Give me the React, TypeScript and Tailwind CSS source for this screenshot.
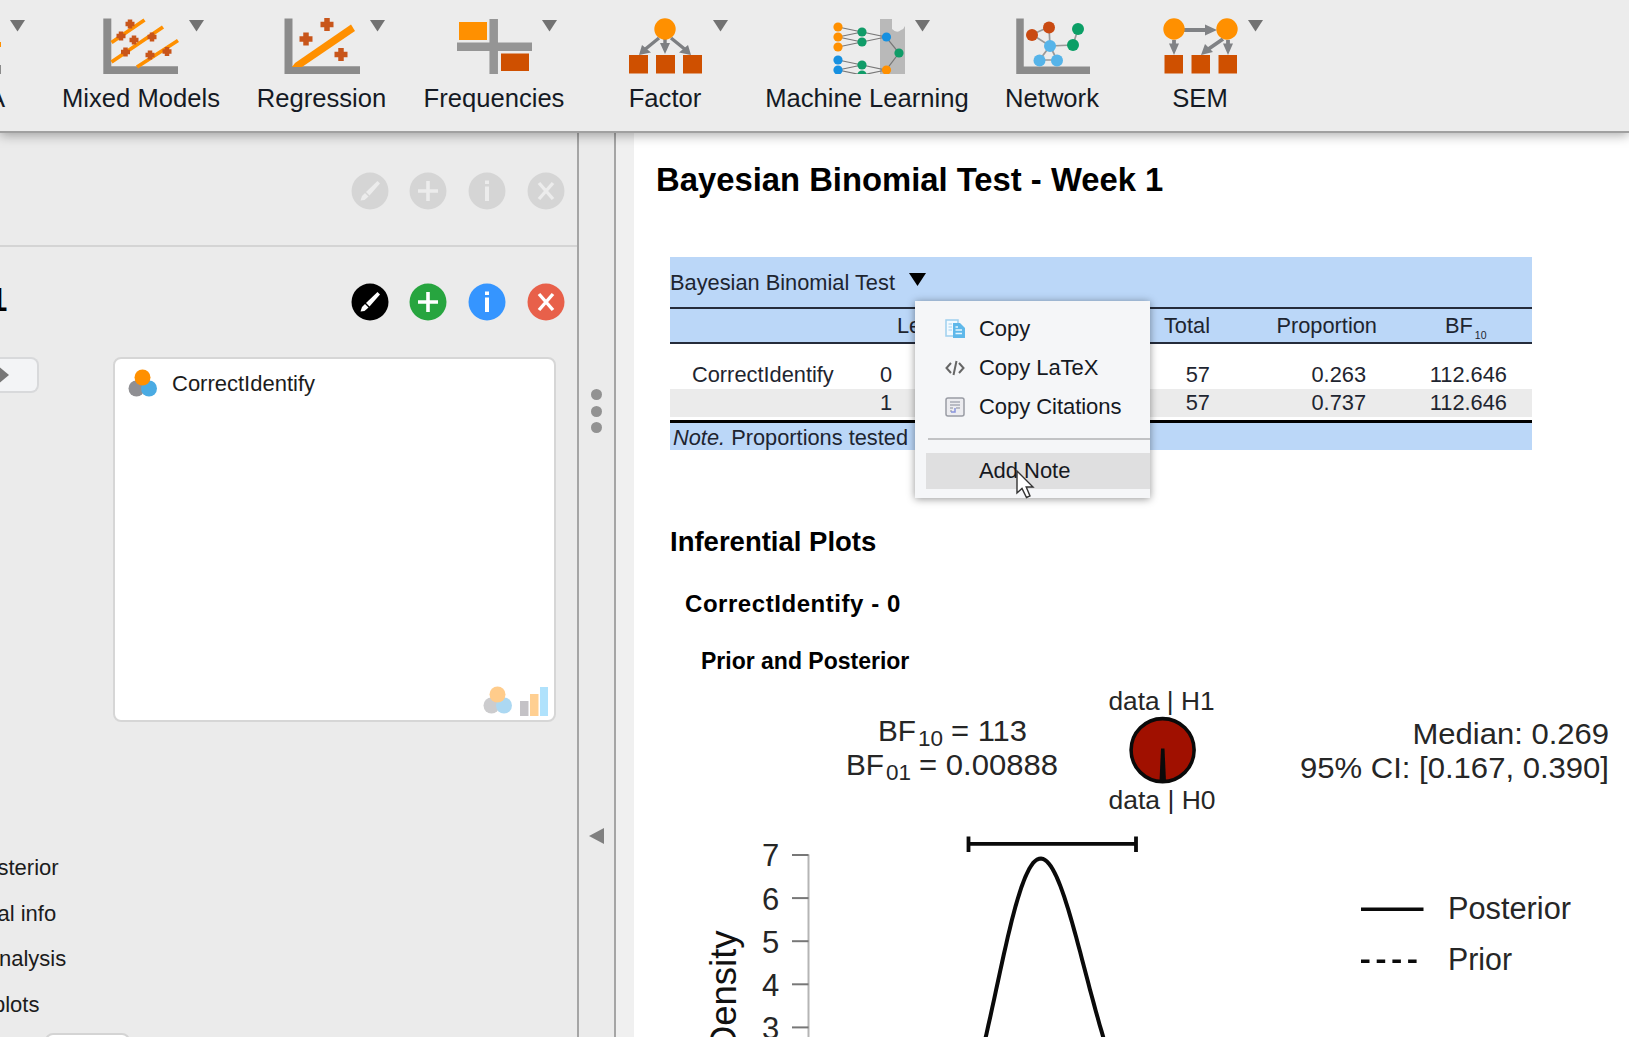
import type { ReactNode } from "react";

const GRAY = "#8b8b8b";
const ORANGE = "#ff9000";
const RUST = "#cf5000";

function Caret() {
  return (
    <svg className="absolute left-[86px] top-[2px]" width="15" height="12" viewBox="0 0 15 12">
      <path d="M0 0H15L7.5 11.5Z" fill="#727272" />
    </svg>
  );
}

function Icon({ x, children }: { x: number; children: ReactNode }) {
  return (
    <svg width="76" height="56" viewBox={`${x} 18 76 56`}>
      {children}
    </svg>
  );
}

function Plus({ x, y, s = 5, w = 4 }: { x: number; y: number; s?: number; w?: number }) {
  return <path d={`M${x - s} ${y}h${2 * s}M${x} ${y - s}v${2 * s}`} stroke="#c8551a" strokeWidth={w} />;
}

function MixedIcon() {
  return (
    <Icon x={103}>
      <path d="M107.3 18.5V70.3H178" fill="none" stroke={GRAY} strokeWidth="8" />
      <path d="M111.5 42.5L144.5 20M111.5 62L163 27M137 67L178 40.500" stroke={ORANGE} strokeWidth="3.8" />
      {[[130, 24], [121, 36], [134, 40], [152, 37], [125.5, 52], [150, 55], [167, 51.5]].map(([x, y]) => (
        <Plus key={`${x}-${y}`} x={x} y={y} s={4.5} w={4.5} />
      ))}
    </Icon>
  );
}

function RegressionIcon() {
  return (
    <Icon x={283}>
      <path d="M287.500 18.5V70.3H360" fill="none" stroke={GRAY} strokeWidth="8" />
      <path d="M291 67L294 63L350 24.500L354 31L301 67Z" fill={ORANGE} />
      <Plus x={305} y={39} s={6.5} w={5.5} />
      <Plus x={326} y={24.5} s={6.5} w={5.5} />
      <Plus x={340} y={54.5} s={6.5} w={5.5} />
    </Icon>
  );
}

function FrequenciesIcon() {
  return (
    <Icon x={456}>
      <path d="M493.700 19V74M457 46.700H532" stroke="#959595" strokeWidth="8.5" />
      <rect x="459" y="22" width="28" height="18" fill={ORANGE} />
      <rect x="501" y="53.5" width="28" height="17.5" fill={RUST} />
    </Icon>
  );
}

function FactorIcon() {
  return (
    <Icon x={627}>
      <path d="M659 38L643 51M665 38V48M671 38L687 51" stroke="#7d7f82" strokeWidth="3.400" />
      <path d="M639 55L642 45L651 52.500ZM691 55L688 45L679 52.500ZM665 54L660 43H670Z" fill="#7d7f82" />
      <circle cx="665" cy="29" r="10.700" fill={ORANGE} />
      <path d="M629 55h19v18.500h-19zM656 55h19v18.500h-19zM683 55h19v18.500h-19z" fill={RUST} />
    </Icon>
  );
}

function MachineLearningIcon() {
  return (
    <Icon x={829}>
      <path d="M880 19H892V29Q897 34 901 30Q904 29 905 26V74H880Z" fill="#b9b9b9" />
      <path
        d="M838 27L862 32L886 37L899 53L886 70L862 65L838 60M838 37L862 32M838 37L862 42L886 37M838 47L862 42M838 70L862 65M838 70L862 75L886 70"
        fill="none"
        stroke="#777"
        strokeWidth="1.200"
      />
      <g fill={ORANGE}>
        <circle cx="838" cy="27" r="4.600" />
        <circle cx="838" cy="37" r="4.600" />
        <circle cx="838" cy="47" r="4.600" />
        <circle cx="886.500" cy="70" r="4.600" />
      </g>
      <g fill="#109c68">
        <circle cx="862" cy="32" r="4.600" />
        <circle cx="862" cy="42" r="4.600" />
        <circle cx="862" cy="65" r="4.600" />
        <circle cx="862" cy="75" r="4.600" />
        <circle cx="899" cy="53" r="4.600" />
      </g>
      <g fill="#1690e0">
        <circle cx="838" cy="60" r="4.600" />
        <circle cx="838" cy="70" r="4.600" />
        <circle cx="886.500" cy="37" r="4.600" />
      </g>
    </Icon>
  );
}

function NetworkIcon() {
  return (
    <Icon x={1014}>
      <path d="M1020 18.500V70.300H1091" fill="none" stroke={GRAY} strokeWidth="7.5" />
      <path d="M1032 34.500L1049 27L1050 46L1032 34.500M1050 46L1039.500 60H1057L1050 46L1073 45L1078 29" fill="none" stroke="#999" strokeWidth="1.700" />
      <circle cx="1032" cy="35" r="6" fill="#c94a12" />
      <circle cx="1049" cy="27.500" r="6" fill="#c94a12" />
      <circle cx="1050" cy="46" r="6" fill="#56b4e9" />
      <circle cx="1039.500" cy="60.500" r="6" fill="#56b4e9" />
      <circle cx="1057" cy="60.500" r="6" fill="#56b4e9" />
      <circle cx="1078" cy="29" r="6" fill="#0b9f66" />
      <circle cx="1073" cy="45" r="6" fill="#0b9f66" />
    </Icon>
  );
}

function SemIcon() {
  return (
    <Icon x={1162}>
      <path d="M1184 30H1207M1174 40V48M1228 40V48M1223 39L1207 50" stroke="#808285" strokeWidth="3.800" />
      <path d="M1217 30L1205 24.500V35.500ZM1174 55L1169 43.500H1179ZM1228 55L1223 43.500H1233ZM1201 55L1205 44L1213 52Z" fill="#808285" />
      <circle cx="1174" cy="29" r="10.700" fill={ORANGE} />
      <circle cx="1227" cy="29" r="10.700" fill={ORANGE} />
      <path d="M1164.500 55h18.500v18.500h-18.500zM1191.500 55h18.500v18.500h-18.500zM1218.500 55h18.500v18.500h-18.500z" fill={RUST} />
    </Icon>
  );
}

function Tool({ label, width, icon, menu = true }: { label: string; width: string; icon: ReactNode; menu?: boolean }) {
  return (
    <div className={`flex shrink-0 flex-col items-center pt-[18px] ${width}`}>
      <div className="relative h-[56px] w-[76px]">
        {icon}
        {menu && <Caret />}
      </div>
      <span className="mt-[9px] text-[25.6px] leading-[30px] whitespace-nowrap text-[#151a24]">{label}</span>
    </div>
  );
}

function Toolbar() {
  return (
    <header className="relative z-10 flex h-[133px] shrink-0 border-b-2 border-[#a0a0a0] bg-[#ececec] shadow-[0_2px_11px_rgba(0,0,0,0.34)]">
      <div className="relative flex w-[50px] shrink-0 flex-col pt-[18px]">
        <svg width="28" height="56" viewBox="0 18 28 56">
          <path d="M10 20H25L17.500 31.500Z" fill="#727272" />
          <path d="M0 42v5h1v-5z" fill={ORANGE} />
          <path d="M0 65v9h1v-9z" fill={GRAY} />
        </svg>
        <span className="mt-[9px] -ml-[12px] text-[25.6px] leading-[30px] text-[#151a24]">A</span>
      </div>
      <Tool label="Mixed Models" width="w-[182px]" icon={<MixedIcon />} />
      <Tool label="Regression" width="w-[179px]" icon={<RegressionIcon />} />
      <Tool label="Frequencies" width="w-[166px]" icon={<FrequenciesIcon />} />
      <Tool label="Factor" width="w-[176px]" icon={<FactorIcon />} />
      <Tool label="Machine Learning" width="w-[228px]" icon={<MachineLearningIcon />} />
      <Tool label="Network" width="w-[142px]" icon={<NetworkIcon />} menu={false} />
      <Tool label="SEM" width="w-[154px]" icon={<SemIcon />} />
    </header>
  );
}

function ActionButtons({ disabled = false }: { disabled?: boolean }) {
  const colors = disabled ? ["#d5d5d5", "#d5d5d5", "#d5d5d5", "#d5d5d5"] : ["#000", "#27a53f", "#3595ff", "#e8604a"];
  const ink = disabled ? "#ececec" : "#fff";
  const glyphs = [
    <g key="edit" fill={ink}>
      <path d="M15 20L26.500 9L29 11.500L18.500 23.500Z" />
      <path d="M14 21L17.500 24.500L13.500 28L9.500 28.500L11 24Z" />
    </g>,
    <path key="add" d="M9 19H29M19 9V29" stroke={ink} strokeWidth="3.600" />,
    <path key="info" d="M19 8.500V12M19 14.500V29" stroke={ink} strokeWidth="4" />,
    <path key="close" d="M12 11L26 27M26 11L12 27" stroke={ink} strokeWidth="3.400" />,
  ];
  return (
    <div className="flex gap-[20.6px]">
      {glyphs.map((glyph, i) => (
        <svg key={i} width="38" height="38" viewBox="0 0 38 38">
          <circle cx="19" cy="19" r="18.500" fill={colors[i]} />
          {glyph}
        </svg>
      ))}
    </div>
  );
}

function NominalIcon({ faded = false }: { faded?: boolean }) {
  return (
    <svg width="30" height="29" viewBox="0 0 30 29" opacity={faded ? 0.45 : 1}>
      <circle cx="8.500" cy="19.500" r="8" fill="#8f8f93" />
      <circle cx="21" cy="19.500" r="8" fill="#4aabe3" />
      <circle cx="14.500" cy="8.500" r="8" fill={ORANGE} />
    </svg>
  );
}

function OptionsPanel() {
  return (
    <section className="flex w-[577px] shrink-0 flex-col overflow-hidden bg-[#ebebeb]">
      <div className="flex h-[114px] shrink-0 items-center justify-end border-b-2 border-[#d4d4d4] pr-[12.5px] pt-[3px]">
        <ActionButtons disabled />
      </div>
      <div className="flex h-[110px] shrink-0 items-center justify-between pr-[12.5px]">
        <span className="-ml-[11px] -mt-[4px] text-[33px] font-bold leading-[36px]">1</span>
        <ActionButtons />
      </div>
      <div className="flex shrink-0">
        <div className="h-[36px] w-[39px] shrink-0 rounded-r-lg border-2 border-l-0 border-[#d8d9db] bg-[#f3f4f6]">
          <svg width="12" height="32" viewBox="0 0 12 32">
            <path d="M0 8.500L9 16L0 23.500Z" fill="#777" />
          </svg>
        </div>
        <div className="ml-[74px] flex h-[365px] w-[443px] shrink-0 flex-col justify-between rounded-lg border-2 border-[#d6d6d6] bg-white">
          <div className="flex items-center pl-[13px] pt-[8px]">
            <NominalIcon />
            <span className="ml-[14px] mt-[2px] text-[22px] leading-[30px] text-[#1c1c1c]">CorrectIdentify</span>
          </div>
          <div className="flex justify-end gap-[7px] pb-[3px] pr-[5px]">
            <NominalIcon faded />
            <svg width="29" height="31" viewBox="0 0 29 31">
              <path d="M0 15h8.500v15H0z" fill="#c4c2c6" />
              <path d="M10 8h8.500v22H10z" fill="#ffcf91" />
              <path d="M20 1h8v29h-8z" fill="#b0e2fc" />
            </svg>
          </div>
        </div>
      </div>
      <div className="mt-[123px] flex shrink-0 flex-col text-[22px] leading-[45.7px] text-[#1c1c1c]">
        <span className="-ml-[2.5px]">sterior</span>
        <span className="-ml-[2.5px]">al info</span>
        <span className="-ml-[1px]">nalysis</span>
        <span className="-ml-[7px]">plots</span>
      </div>
      <div className="ml-[45px] mt-[5px] h-[30px] w-[85px] shrink-0 rounded-lg border-2 border-[#d4d4d4] bg-white" />
    </section>
  );
}

function Splitter() {
  return (
    <div className="flex w-[57px] shrink-0 bg-[#f0f0f0]">
      <div className="flex w-[39px] flex-col items-center border-x-2 border-[#a5a5a5] bg-[#ebebeb] pt-[256px]">
        <div className="flex flex-col gap-[5.5px]">
          <i className="size-[11px] rounded-full bg-[#929292]" />
          <i className="size-[11px] rounded-full bg-[#929292]" />
          <i className="size-[11px] rounded-full bg-[#929292]" />
        </div>
        <svg className="mt-[395px]" width="15" height="16" viewBox="0 0 15 16">
          <path d="M15 0V16L0 8Z" fill="#808080" />
        </svg>
      </div>
    </div>
  );
}

function MenuItem({ label, icon }: { label: string; icon?: ReactNode }) {
  return (
    <div className="flex h-[39px] items-center pl-[30px]">
      <span className="flex w-[34px]">{icon}</span>
      <span>{label}</span>
    </div>
  );
}

function ContextMenu() {
  return (
    <div className="absolute left-[245px] top-[44px] z-20 h-[197px] w-[235px] bg-[#f5f6f8] pt-[8px] text-[22px] leading-[30px] tracking-[-0.05px] text-[#16191f] shadow-[0_1px_8px_rgba(0,0,0,0.42)]">
      <MenuItem
        label="Copy"
        icon={
          <svg width="20" height="19" viewBox="0 0 20 19">
            <path d="M1 1H13V17H1Z" fill="#f3faff" stroke="#9fd0ee" strokeWidth="1.500" />
            <path d="M3.500 5H7M3.500 8H7M3.500 11H7" stroke="#9fd0ee" />
            <path d="M8 4H15L20 9V19H8Z" fill="#5fb8ea" />
            <path d="M10.500 11H17M10.500 14.500H17M10.500 8H13" stroke="#e6f6ff" strokeWidth="1.300" />
          </svg>
        }
      />
      <MenuItem
        label="Copy LaTeX"
        icon={
          <svg width="20" height="16" viewBox="0 0 20 16">
            <path d="M6 3L1.500 8L6 13M14 3L18.500 8L14 13M11.500 1L8.500 15" fill="none" stroke="#666" strokeWidth="2" />
          </svg>
        }
      />
      <MenuItem
        label="Copy Citations"
        icon={
          <svg width="20" height="20" viewBox="0 0 20 20">
            <rect x="1" y="1" width="18" height="18" rx="2" fill="#ececf0" stroke="#999ca4" strokeWidth="1.500" />
            <path d="M5 5H15M5 8H15M5 11H8M11 11H15M5 14H7" stroke="#a8abb5" strokeWidth="1.500" />
            <path d="M6 15H10V11" fill="none" stroke="#8793dc" strokeWidth="1.500" />
          </svg>
        }
      />
      <div className="ml-[13px] mt-[12px] border-t-2 border-[#c2c3c5]" />
      <div className="relative ml-[11px] mt-[13px] flex h-[36px] items-center bg-[#dfdfe0] pl-[53px]">
        Add Note
        <svg className="absolute left-[90px] top-[17px]" width="20" height="30" viewBox="0 0 20 30">
          <path d="M1 1V23L6 18.500L10.500 27.500L14 26L10.200 17H17Z" fill="#fff" stroke="#333" strokeWidth="1.400" />
        </svg>
      </div>
    </div>
  );
}

const COLUMNS = "grid grid-cols-[222px_94px_224px_167px_155px]";

function ResultsTable() {
  return (
    <div className="relative mt-[57px] ml-[36px] w-[862px] text-[21.8px] leading-[28px] text-[#1e2530]">
      <div className="flex h-[50px] items-center bg-[#bbd7f8] pt-px">
        <span>Bayesian Binomial Test</span>
        <svg className="mb-[6px] ml-[14px]" width="17" height="13" viewBox="0 0 17 13">
          <path d="M0 0H17L8.500 13Z" fill="#000" />
        </svg>
      </div>
      <div className={`${COLUMNS} h-[37px] items-center border-y-2 border-[#252c3b] bg-[#bbd7f8]`}>
        <span />
        <span className="pl-[5px]">Level</span>
        <span className="text-right">Total</span>
        <span className="text-right">Proportion</span>
        <span className="flex pl-[68px]">
          BF<span className="relative top-[9px] ml-[2px] text-[10.5px]">10</span>
        </span>
      </div>
      <div className={`${COLUMNS} h-[45px] items-end bg-white`}>
        <span className="pl-[22px]">CorrectIdentify</span>
        <span className="-ml-[12px]">0</span>
        <span className="text-right">57</span>
        <span className="pr-[11px] text-right">0.263</span>
        <span className="pr-[25px] text-right">112.646</span>
      </div>
      <div className={`${COLUMNS} h-[28px] items-center bg-[#ebebeb]`}>
        <span />
        <span className="-ml-[12px]">1</span>
        <span className="text-right">57</span>
        <span className="pr-[11px] text-right">0.737</span>
        <span className="pr-[25px] text-right">112.646</span>
      </div>
      <div className="mt-[3px] h-[30px] border-t-3 border-black bg-[#bbd7f8] pl-[3px] leading-[29px]">
        <em>Note.</em> Proportions tested
      </div>
      <ContextMenu />
    </div>
  );
}

/* Posterior density of a Beta(16, 43) distribution, scaled to the plot axes. */
const MODE = 15 / 57;
const curve = Array.from({ length: 81 }, (_, i) => {
  const p = 0.17 + i * 0.0026;
  const d = 6.92 * Math.exp(15 * Math.log(p / MODE) + 42 * Math.log((1 - p) / (1 - MODE)));
  return `${(1040.7 + (p - MODE) * 751).toFixed(1)},${(1157.4 - 43.1 * d).toFixed(1)}`;
}).join(" ");

function Label({ x, y, w, s, children }: { x: number; y: number; w: number; s: number; children: string }) {
  return (
    <text x={x} y={y} fontSize={s} textLength={w} lengthAdjust="spacingAndGlyphs">
      {children}
    </text>
  );
}

function PosteriorPlot() {
  return (
    <svg className="block shrink-0" width="995" height="357" viewBox="634 680.6 995 357" fill="#262626">
      <Label x={878} y={741.5} w={38} s={29}>BF</Label>
      <Label x={918} y={746.5} w={25} s={22.5}>10</Label>
      <Label x={951} y={741.5} w={76} s={29}>= 113</Label>
      <Label x={846} y={775.5} w={38} s={29}>BF</Label>
      <Label x={886} y={780.5} w={25} s={22.5}>01</Label>
      <Label x={919} y={775.5} w={139} s={29}>= 0.00888</Label>

      <Label x={1108.5} y={710.5} w={106} s={26.5}>data | H1</Label>
      <Label x={1108.5} y={810} w={107} s={26.5}>data | H0</Label>
      <circle cx="1162.600" cy="750.700" r="31.500" fill="#a01000" stroke="#0a0a0a" strokeWidth="3.600" />
      <path d="M1161 749H1164.500L1166 782H1159.500Z" fill="#0a0a0a" />

      <Label x={1412.5} y={744.5} w={196.5} s={29.5}>Median: 0.269</Label>
      <Label x={1300} y={778.5} w={309} s={29.5}>95% CI: [0.167, 0.390]</Label>

      <path d="M968.500 844.500H1136M968.500 837V852.500M1136 837V852.500" stroke="#0a0a0a" strokeWidth="3.800" />
      <path d="M808.500 855V1040" stroke="#b5b5b5" strokeWidth="2" />
      {[7, 6, 5, 4, 3].map((n) => {
        const y = 855.6 + (7 - n) * 43.1;
        return (
          <g key={n}>
            <path d={`M792 ${y}H808.500`} stroke="#777" strokeWidth="2" />
            <text x="770.500" y={y + 11.5} fontSize="31" textAnchor="middle">{n}</text>
          </g>
        );
      })}
      <text transform="translate(736 931) rotate(-90)" fontSize="36.500" textAnchor="end" fill="#111">Density</text>
      <polyline points={curve} fill="none" stroke="#0a0a0a" strokeWidth="4" />

      <path d="M1361 909.900H1423.500" stroke="#0a0a0a" strokeWidth="3.600" />
      <path d="M1361 961.900H1417" stroke="#0a0a0a" strokeWidth="3.600" strokeDasharray="8.500 7.200" />
      <Label x={1448} y={919.5} w={123} s={31}>Posterior</Label>
      <Label x={1448} y={971} w={64} s={31}>Prior</Label>
    </svg>
  );
}

function Results() {
  return (
    <main className="flex flex-1 flex-col overflow-hidden bg-white pt-[27px]">
      <h1 className="ml-[22px] text-[32.8px] font-bold leading-[40px] whitespace-nowrap text-black">Bayesian Binomial Test - Week 1</h1>
      <ResultsTable />
      <h2 className="ml-[36px] mt-[76px] text-[27.5px] font-bold leading-[32px] text-black">Inferential Plots</h2>
      <h3 className="ml-[51px] mt-[31px] text-[24px] font-bold leading-[30px] tracking-[0.55px] text-black">CorrectIdentify - 0</h3>
      <h4 className="ml-[67px] mt-[28px] text-[23px] font-bold leading-[28px] text-black">Prior and Posterior</h4>
      <div className="mt-auto">
        <PosteriorPlot />
      </div>
    </main>
  );
}

export default function App() {
  return (
    <div className="flex h-[1037px] w-[1629px] flex-col overflow-hidden bg-white font-['Liberation_Sans',Arial,sans-serif]">
      <Toolbar />
      <div className="flex min-h-0 flex-1">
        <OptionsPanel />
        <Splitter />
        <Results />
      </div>
    </div>
  );
}
